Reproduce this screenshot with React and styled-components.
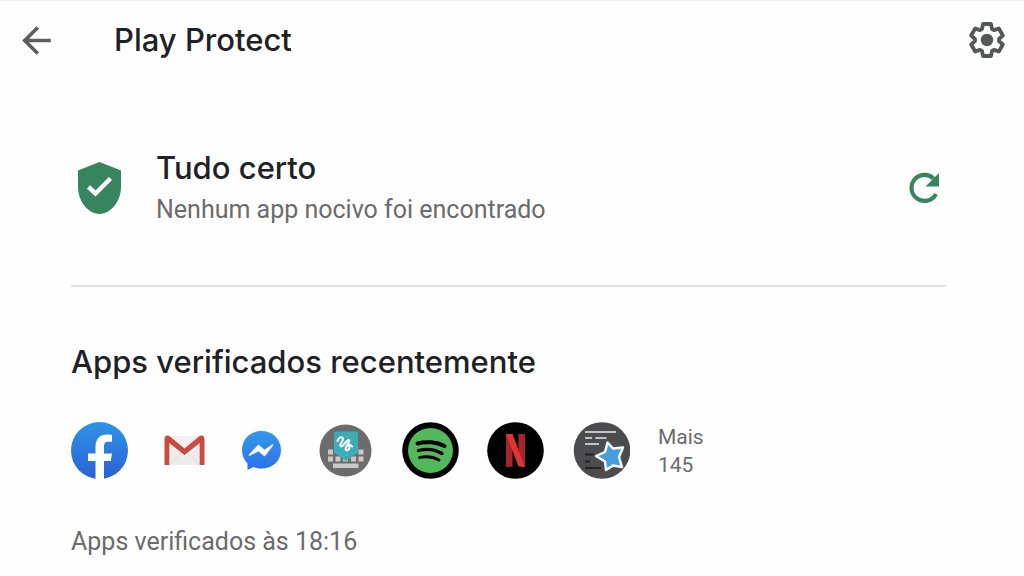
import styled, { createGlobalStyle } from "styled-components";
import { MdArrowBack } from "react-icons/md";

const GlobalStyle = createGlobalStyle`
  * {
    box-sizing: border-box;
  }
  body {
    margin: 0;
    background-color: #fefefe;
    color: #202124;
    font-family: Roboto, "Liberation Sans", sans-serif;
  }
`;
const Container = styled.div`
  border-top: 1px solid #f1f1f1;
`;
const Header = styled.header`
  height: 78px;
  padding: 0 18px 0 15px;
  display: flex;
  align-items: center;
`;
const IconButton = styled.button`
  display: flex;
  padding: 0;
  border: none;
  background: none;
  color: ${(props) => props.$color};
  cursor: pointer;
`;
const Title = styled.h1`
  flex: 1;
  margin: 0;
  padding-left: 56px;
  font-family: Inter, sans-serif;
  font-size: 31px;
  line-height: 36px;
  font-weight: 500;
`;
const Main = styled.main`
  padding: 0 78px 0 71px;
`;
const Status = styled.section`
  padding: 71px 0 59px;
  display: flex;
  align-items: center;
  border-bottom: 2px solid #e2e2e2;
`;
const ShieldBox = styled.div`
  display: flex;
  width: 85px;
  padding-left: 7px;
`;
const StatusText = styled.div`
  flex: 1;
  display: flex;
  flex-direction: column;
  gap: 8px;
`;
const Heading = styled.h2`
  margin: 0;
  font-family: Inter, sans-serif;
  font-size: 31px;
  line-height: 36px;
  font-weight: 500;
`;
const Text = styled.p`
  margin: 0;
  color: #6b6b6b;
  font-size: 25px;
  line-height: 32px;
`;
const Recent = styled.section`
  padding-top: 57px;
`;
const AppsRow = styled.div`
  padding: 42px 0 47px;
  display: flex;
  align-items: center;
  gap: 28px;
`;
const MoreLink = styled.a`
  display: flex;
  flex-direction: column;
  color: #6b6b6b;
  font-size: 21px;
  line-height: 28px;
  text-decoration: none;
`;

const toothPoints = [
  [-5, -11],
  [-4, -16],
  [4, -16],
  [5, -11],
];
const gearPoints = [0, 60, 120, 180, 240, 300]
  .flatMap((deg) => {
    const a = (deg * Math.PI) / 180;
    return toothPoints.map(([x, y]) => [
      x * Math.cos(a) - y * Math.sin(a),
      x * Math.sin(a) + y * Math.cos(a),
    ]);
  })
  .join(" ");

const Gear = () => (
  <svg width="38" height="38" viewBox="-19 -19 38 38">
    <polygon
      points={gearPoints}
      fill="none"
      stroke="currentColor"
      strokeWidth="3.8"
      strokeLinejoin="round"
    />
    <circle r="6.2" fill="currentColor" />
  </svg>
);

const Refresh = () => (
  <svg width="44" height="44" viewBox="0 0 44 44">
    <path
      d="M34 28A13 13 0 1 1 31.500 12.500"
      fill="none"
      stroke="currentColor"
      strokeWidth="4.200"
    />
    <path d="M37 7v13.500H23.500z" fill="currentColor" />
  </svg>
);

const Shield = () => (
  <svg width="43" height="52" viewBox="0 0 43 52">
    <path
      d="M21.5 0 43 8.5V25c0 13-8 23.500-17 26.300q-4.500 1.400-9 0C8 48.500 0 38 0 25V8.500z"
      fill="#37855f"
    />
    <path d="M10.500 25l7 6.500 15-15" fill="none" stroke="#fff" strokeWidth="4.500" />
  </svg>
);

const Facebook = () => (
  <svg width="57" height="57" viewBox="0 0 57 57">
    <defs>
      <linearGradient id="fb" x1="0" y1="0" x2="0" y2="1">
        <stop offset="0" stopColor="#2f93e6" />
        <stop offset="1" stopColor="#2a62d6" />
      </linearGradient>
    </defs>
    <circle cx="28.500" cy="28.500" r="28.500" fill="url(#fb)" />
    <path
      d="M24.500 57V39H17v-7.500h7.500V25c0-8 4.500-12.500 11-12.500 2.500 0 5.500.4 5.500.4v6.800h-3.500c-3.500 0-4.500 2-4.500 4.500v7.300h8L39.800 39H33v18z"
      fill="#fff"
    />
  </svg>
);

const Gmail = () => (
  <svg width="57" height="57" viewBox="0 0 57 57">
    <rect x="9" y="14" width="39" height="29" rx="2" fill="#ececec" />
    <path d="M13 43l13-13M44 43L31 30" stroke="#dcdcdc" strokeWidth="1" />
    <path d="M12 17l16.500 13L45 17v-3H12z" fill="#f4f0f0" />
    <path
      d="M8.500 43V17c0-3.500 3-4.500 5.500-2.500l14.500 12L43 14.500c2.500-2 5.500-1 5.500 2.500v26h-4.800V21L28.500 33 13.300 21v22z"
      fill="#cb4a40"
    />
  </svg>
);

const Messenger = () => (
  <svg width="48" height="57" viewBox="0 0 48 57">
    <defs>
      <linearGradient id="msg" x1="0" y1="0" x2="0" y2="1">
        <stop offset="0" stopColor="#3598ea" />
        <stop offset="1" stopColor="#2b72ea" />
      </linearGradient>
    </defs>
    <path
      d="M20.500 9C31.500 9 40 17 40 28s-8.500 18.500-19.500 18.500c-3 0-5.500-.5-8-1.500L6.500 48V41.500C3 38 1 33.500 1 28 1 17 9.500 9 20.500 9z"
      fill="url(#msg)"
    />
    <path d="M8.500 33l9-9.500 6 5 8-5.500-8 10.500-6-5z" fill="#fff" stroke="#fff" strokeWidth="1.500" strokeLinejoin="round" />
  </svg>
);

const Keyboard = () => (
  <svg width="57" height="57" viewBox="0 0 57 57">
    <circle cx="28.500" cy="28.500" r="26" fill="#6c6c6c" />
    <path
      d="M11 27.500h5v5h-5zM11 34.500h5v5h-5zM18.500 34.500h5v5h-5zM26 34.500h5v5h-5zM34 34.500h5v5h-5zM41.500 27.500h5v5h-5zM41.500 34.500h5v5h-5zM16 41.500h25.500v4.500H16z"
      fill="#c9c9c9"
    />
    <path d="M17 12q0-2.500 2.500-2.500h19q2.500 0 2.500 2.500v18.500L29 39 17 30.500z" fill="#3cacb8" />
    <path
      d="M20.500 19c.5-3 4.500-5 5.500-2.500 1 2.500-4 5-2.500 7.500 2 2.500 5-5.500 8-6 3 0-3 6-3 9 .5 3 4 .5 4-1.500 0-2-2.500-2-2.500-2s4-1.500 5 1"
      fill="none"
      stroke="#fff"
      strokeWidth="2"
      strokeLinecap="round"
    />
  </svg>
);

const Spotify = () => (
  <svg width="57" height="57" viewBox="0 0 57 57">
    <circle cx="28.500" cy="28.500" r="28.300" fill="#000" />
    <circle cx="28.500" cy="28.500" r="22.500" fill="#52b95b" />
    <g fill="none" stroke="#000" strokeLinecap="round">
      <path d="M15.500 21.500c8.500-2.500 19.500-1.500 27 2.500" strokeWidth="4" />
      <path d="M16.500 28.500c8-2 16.500-1 23.500 3" strokeWidth="3.300" />
      <path d="M17.500 35.500c7-1.500 13.500-.8 19.500 2.500" strokeWidth="2.800" />
    </g>
  </svg>
);

const Netflix = () => (
  <svg width="57" height="57" viewBox="0 0 57 57">
    <circle cx="28.500" cy="28.500" r="28.300" fill="#000" />
    <path d="M19 12h6.500v32.500L19 45zM31.500 12H38v33l-6.500-.5z" fill="#a5262a" />
    <path d="M19 12h6.500L38 45l-6.500-.8z" fill="#de3436" />
  </svg>
);

const StarNotes = () => (
  <svg width="58" height="57" viewBox="0 0 58 57">
    <circle cx="30" cy="28.500" r="28.300" fill="#4b4c4d" />
    <path d="M13 10h31M13 16h7M23.500 16h11M13 22h14" stroke="#c4c4c4" strokeWidth="2" />
    <path d="M13 32.500h9M13 39.500h5M13 46h16" stroke="#222" strokeWidth="2" />
    <path
      d="M35.500 20.500L41 26.500 51 25.500 47 35 50 45 41 43.500 34 48 33 39.500 24 34 33 30z"
      fill="#43a0dc"
      stroke="#fff"
      strokeWidth="2.400"
      strokeLinejoin="round"
    />
  </svg>
);

const apps = [
  { name: "Facebook", Icon: Facebook },
  { name: "Gmail", Icon: Gmail },
  { name: "Messenger", Icon: Messenger },
  { name: "Keyboard", Icon: Keyboard },
  { name: "Spotify", Icon: Spotify },
  { name: "Netflix", Icon: Netflix },
  { name: "Notes", Icon: StarNotes },
];

export default function App() {
  return (
    <Container>
      <GlobalStyle />
      <Header>
        <IconButton $color="#5f5f5f" aria-label="Voltar">
          <MdArrowBack size={43} />
        </IconButton>
        <Title>Play Protect</Title>
        <IconButton $color="#555759" aria-label="Configurações">
          <Gear />
        </IconButton>
      </Header>
      <Main>
        <Status>
          <ShieldBox>
            <Shield />
          </ShieldBox>
          <StatusText>
            <Heading>Tudo certo</Heading>
            <Text>Nenhum app nocivo foi encontrado</Text>
          </StatusText>
          <IconButton $color="#37855f" aria-label="Verificar">
            <Refresh />
          </IconButton>
        </Status>
        <Recent>
          <Heading>Apps verificados recentemente</Heading>
          <AppsRow>
            {apps.map(({ name, Icon }) => (
              <IconButton key={name} aria-label={name}>
                <Icon />
              </IconButton>
            ))}
            <MoreLink href="#mais">
              <span>Mais</span>
              <span>145</span>
            </MoreLink>
          </AppsRow>
          <Text>Apps verificados às 18:16</Text>
        </Recent>
      </Main>
    </Container>
  );
}
